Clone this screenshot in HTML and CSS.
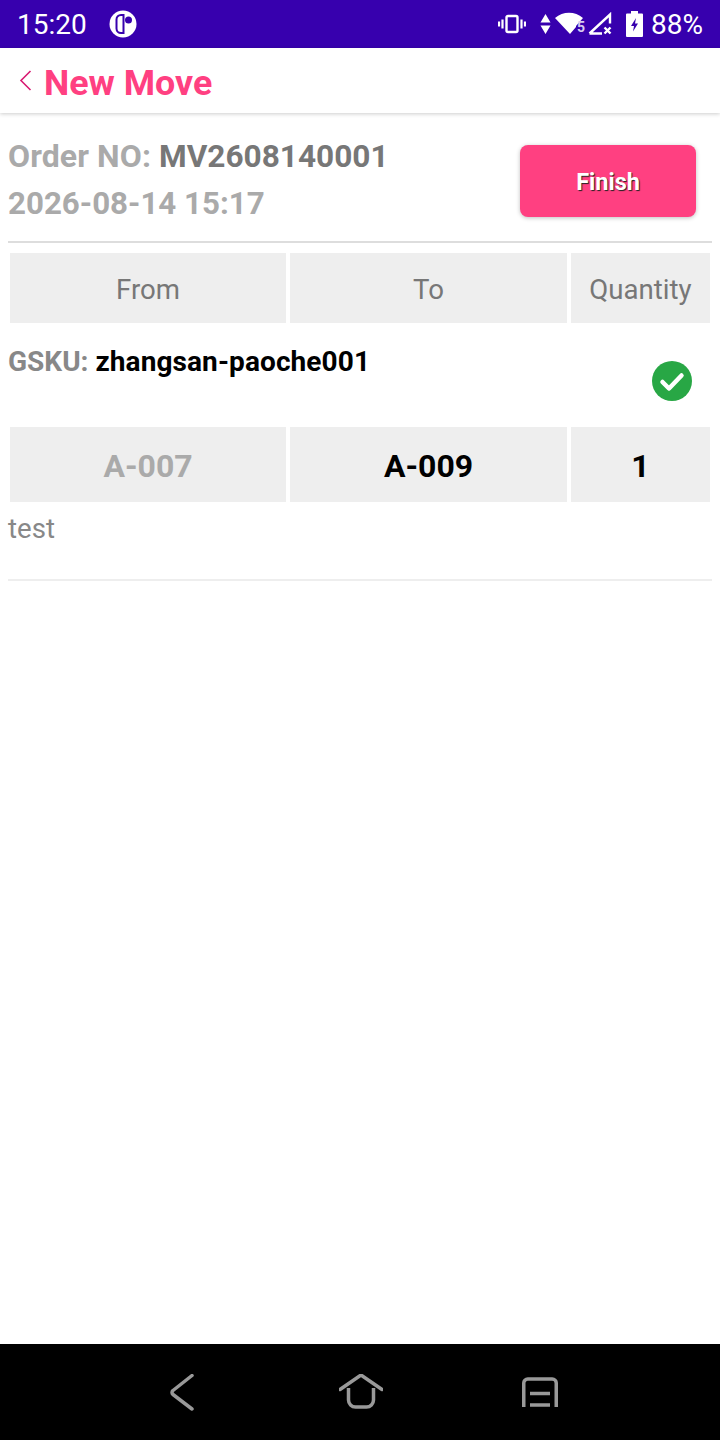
FILE: index.html
```html
<!DOCTYPE html>
<html lang="en">
<head>
    <meta charset="UTF-8">
    <meta name="viewport" content="width=device-width, initial-scale=1.0">
    <title>New Move</title>
    <link rel="stylesheet" href="styles.css">
</head>
<body>
    <div class="screen">
        <!-- Status bar -->
        <div class="status-bar">
            <div class="status-left">
                <span class="clock">15:20</span>
                <svg class="app-dot" width="28" height="28" viewBox="0 0 28 28">
                    <circle cx="14" cy="14" r="13.5" fill="#fff"/>
                    <path d="M12 5h2.500v18H12a4.500 4.500 0 0 1-4.500-4.500v-9A4.500 4.500 0 0 1 12 5z" fill="#fff" stroke="#3700ae" stroke-width="2"/>
                    <circle cx="19.500" cy="10" r="3.500" fill="#3700ae"/>
                </svg>
            </div>
            <div class="status-right">
                <svg width="28" height="20" viewBox="0 0 28 20" fill="none" stroke="#fff">
                    <rect x="8.500" y="2" width="11" height="16" rx="1.500" stroke-width="2.400"/>
                    <path d="M4.500 5.500v9M1 7.500v5M23.500 5.500v9M27 7.500v5" stroke-width="2.200"/>
                </svg>
                <svg class="arrows" width="11" height="22" viewBox="0 0 11 22" fill="#fff">
                    <path d="M5.500 1L10.500 9.500H.5zM.5 12.500H10.500L5.500 21z"/>
                </svg>
                <div class="wifi">
                    <svg width="30" height="24" viewBox="0 0 30 24" fill="#fff">
                        <path d="M0 6C8-1 20-1 28 6L21 14V15L15 22Z"/>
                    </svg>
                    <span class="wifi-num">5</span>
                </div>
                <svg class="signal" width="26" height="24" viewBox="0 0 26 24" fill="none" stroke="#fff">
                    <path d="M2.500 21.500L23 2.500v9M2.500 21.500H15" stroke-width="2.400"/>
                    <path d="M17.500 15.500l6 6M23.500 15.500l-6 6" stroke-width="2.400"/>
                </svg>
                <svg class="battery" width="17" height="26" viewBox="0 0 17 26">
                    <path fill="#fff" d="M5 0h7v2.500h4a1 1 0 0 1 1 1V25a1 1 0 0 1-1 1H1a1 1 0 0 1-1-1V3.500a1 1 0 0 1 1-1h4z"/>
                    <path fill="#3700ae" d="M10 7L5 15h3l-1 5.500 5-8H9z"/>
                </svg>
                <span class="percent">88%</span>
            </div>
        </div>

        <!-- Title bar -->
        <div class="title-bar">
            <svg class="back" width="14" height="22" viewBox="0 0 14 22" fill="none" stroke="#d81b72" stroke-width="1.600">
                <path d="M11.500 1L2 10.500 11.500 20"/>
            </svg>
            <h1>New Move</h1>
        </div>

        <div class="content">
            <div class="order">
                <div class="order-info">
                    <div class="order-line order-first">Order NO: <span class="order-no">MV2608140001</span></div>
                    <div class="order-line">2026-08-14 15:17</div>
                </div>
                <button class="finish">Finish</button>
            </div>

            <div class="table table-head">
                <div class="cell">From</div>
                <div class="cell">To</div>
                <div class="cell">Quantity</div>
            </div>

            <div class="item">
                <div class="sku"><span class="sku-label">GSKU:</span> <span class="sku-value">zhangsan-paoche001</span></div>
                <svg class="check" width="40" height="40" viewBox="0 0 40 40">
                    <circle cx="20" cy="20" r="20" fill="#28a745"/>
                    <path d="M10.500 21l6.500 6.500L29.500 14.500" fill="none" stroke="#fff" stroke-width="4.500" stroke-linecap="round" stroke-linejoin="round"/>
                </svg>
            </div>

            <div class="table table-row">
                <div class="cell muted">A-007</div>
                <div class="cell">A-009</div>
                <div class="cell">1</div>
            </div>
            <div class="note">test</div>
        </div>

        <!-- Navigation bar -->
        <div class="nav-bar">
            <svg width="24" height="38" viewBox="0 0 24 38" fill="none" stroke="#999" stroke-width="3.500" stroke-linecap="round" stroke-linejoin="round">
                <path d="M22 1.500L3 16.500a2.500 2.500 0 0 0 0 4L22 35"/>
            </svg>
            <svg width="44" height="38" viewBox="0 0 44 38" fill="none" stroke="#999" stroke-width="3.500">
                <path d="M1 15.500L22 1l21 14.500" stroke-linecap="round"/>
                <path d="M9.500 14V26a7 7 0 0 0 7 7h11a7 7 0 0 0 7-7V14"/>
            </svg>
            <svg width="38" height="32" viewBox="0 0 38 32" fill="none" stroke="#999" stroke-width="3.500">
                <path d="M1.750 30V6a4 4 0 0 1 4-4h24.500a4 4 0 0 1 4 4v24"/>
                <path d="M8 16.500h20M8 28h20"/>
            </svg>
        </div>
    </div>
</body>
</html>
```

FILE: styles.css
```css
* {
    box-sizing: border-box;
}

body {
    margin: 0;
    font-family: Roboto, "Liberation Sans", sans-serif;
    background-color: #fff;
}

.screen {
    width: 720px;
    height: 1440px;
    display: flex;
    flex-direction: column;
}

/* Status bar */
.status-bar {
    height: 48px;
    background-color: #3700ae;
    color: #fff;
    display: flex;
    align-items: center;
    justify-content: space-between;
    padding: 0 17px;
}

.status-left {
    display: flex;
    align-items: center;
    gap: 22px;
}

.clock {
    font-size: 28px;
}

.status-right {
    display: flex;
    align-items: center;
}

.arrows {
    margin-left: 14px;
}

.wifi {
    position: relative;
    width: 30px;
    height: 24px;
    margin-left: 4px;
}

.wifi-num {
    position: absolute;
    right: 0;
    bottom: 2px;
    font-size: 14px;
    line-height: 14px;
    font-weight: 700;
    color: #d8ccf0;
}

.signal {
    margin-left: 2px;
}

.battery {
    margin-left: 13px;
}

.percent {
    font-size: 28px;
    margin-left: 8px;
}

/* Title bar */
.title-bar {
    height: 65px;
    display: flex;
    align-items: center;
    padding-left: 19px;
    gap: 11px;
    box-shadow: 0 1px 4px rgba(0, 0, 0, 0.2);
}

.title-bar h1 {
    margin: 4px 0 0;
    font-size: 35.8px;
    font-weight: 700;
    color: #ff4081;
}

/* Content */
.content {
    flex: 1;
    padding: 0 8px;
}

.order {
    height: 130px;
    display: flex;
    align-items: center;
    justify-content: space-between;
    padding: 5px 16px 0 0;
    border-bottom: 2px solid #ddd;
}

.order-line {
    font-size: 31.3px;
    font-weight: 700;
    line-height: 47px;
    color: #aaa;
}

.order-first {
    font-size: 32px;
    letter-spacing: 0.1px;
}

.order-no {
    font-size: 31.6px;
    letter-spacing: 0;
    color: #777;
}

.finish {
    width: 176px;
    height: 72px;
    margin-top: 2px;
    padding-top: 4px;
    border: none;
    border-radius: 8px;
    background-color: #ff4081;
    color: #fff;
    font-family: inherit;
    font-size: 23.5px;
    font-weight: 700;
    text-shadow: 1px 1px 1px #222;
    box-shadow: 0 1px 4px rgba(0, 0, 0, 0.25);
}

.table {
    display: grid;
    grid-template-columns: 276px 277px 139px;
    gap: 4px;
    padding: 0 2px;
}

.cell {
    display: flex;
    align-items: center;
    justify-content: center;
    padding-top: 2px;
    background-color: #eee;
}

.table-head {
    margin-top: 10px;
    height: 70px;
    font-size: 27.6px;
    color: #777;
}

.table-row {
    height: 75px;
    font-size: 32px;
    font-weight: 700;
    color: #000;
}

.muted {
    color: #aaa;
}

.item {
    height: 104px;
    display: flex;
    justify-content: space-between;
    padding: 22px 20px 0 0;
}

.sku {
    font-size: 28px;
    font-weight: 700;
    color: #000;
    line-height: 34px;
}

.sku-label {
    color: #888;
}

.sku-value {
    letter-spacing: 0.1px;
}

.check {
    margin-top: 16px;
}

.note {
    height: 79px;
    padding-top: 10px;
    font-size: 27.6px;
    line-height: 34px;
    color: #888;
    border-bottom: 2px solid #eee;
}

/* Navigation bar */
.nav-bar {
    height: 96px;
    background-color: #000;
    display: flex;
    align-items: center;
    padding: 2px 0 0 170px;
}

.nav-bar svg:nth-child(1) {
    margin-right: 145px;
}

.nav-bar svg:nth-child(2) {
    margin-right: 139px;
}
```
